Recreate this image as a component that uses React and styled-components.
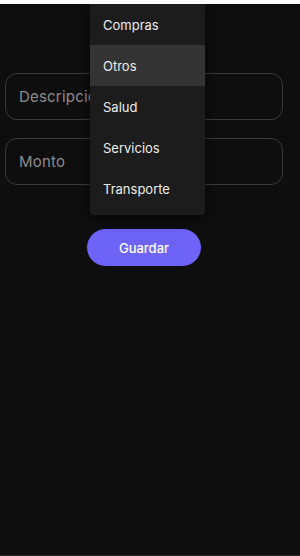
import React from "react";
import styled, { createGlobalStyle } from "styled-components";

const Global = createGlobalStyle`
  html, body {
    margin: 0;
    padding: 0;
    background: #ffffff;
  }
  * { box-sizing: border-box; }
`;

const Screen = styled.div`
  position: relative;
  margin-top: 4px;
  height: 552px;
  background: #0e0e0e;
  border-bottom: 1px solid #2a2a2a;
  font-family: Inter, "Noto Sans", sans-serif;
  overflow: hidden;
`;

const Form = styled.div`
  display: flex;
  flex-direction: column;
  align-items: center;
  padding: 69px 17px 0 5px;
`;

const Field = styled.div`
  width: 100%;
  height: 47px;
  border: 1px solid #3a3a3a;
  border-radius: 12px;
  display: flex;
  align-items: center;
  padding-left: 13px;
  margin-bottom: ${(p) => p.gap || 0}px;
  color: #8c8c8c;
  font-size: 15px;
  letter-spacing: 0.2px;
`;

const SaveButton = styled.button`
  margin-top: 44px;
  width: 114px;
  height: 37px;
  border: none;
  border-radius: 19px;
  background: #6e63f7;
  color: #ffffff;
  font-family: Inter, "Noto Sans", sans-serif;
  font-size: 13px;
  font-weight: 500;
`;

const Menu = styled.ul`
  position: absolute;
  top: 0;
  left: 90px;
  width: 115px;
  margin: 0;
  padding: 0 0 6px;
  list-style: none;
  background: #1c1c1c;
  border-radius: 0 0 4px 4px;
  box-shadow: 0 4px 12px rgba(0, 0, 0, 0.5);
`;

const MenuItem = styled.li`
  height: 41px;
  display: flex;
  align-items: center;
  padding-left: 13px;
  color: #ededed;
  font-size: 13px;
  background: ${(p) => (p.active ? "#343434" : "transparent")};
`;

const options = ["Compras", "Otros", "Salud", "Servicios", "Transporte"];

export default function App() {
  return (
    <>
      <Global />
      <Screen>
        <Form>
          <Field gap={18}>Descripción</Field>
          <Field>Monto</Field>
          <SaveButton>Guardar</SaveButton>
        </Form>
        <Menu>
          {options.map((o) => (
            <MenuItem key={o} active={o === "Otros"}>
              {o}
            </MenuItem>
          ))}
        </Menu>
      </Screen>
    </>
  );
}
